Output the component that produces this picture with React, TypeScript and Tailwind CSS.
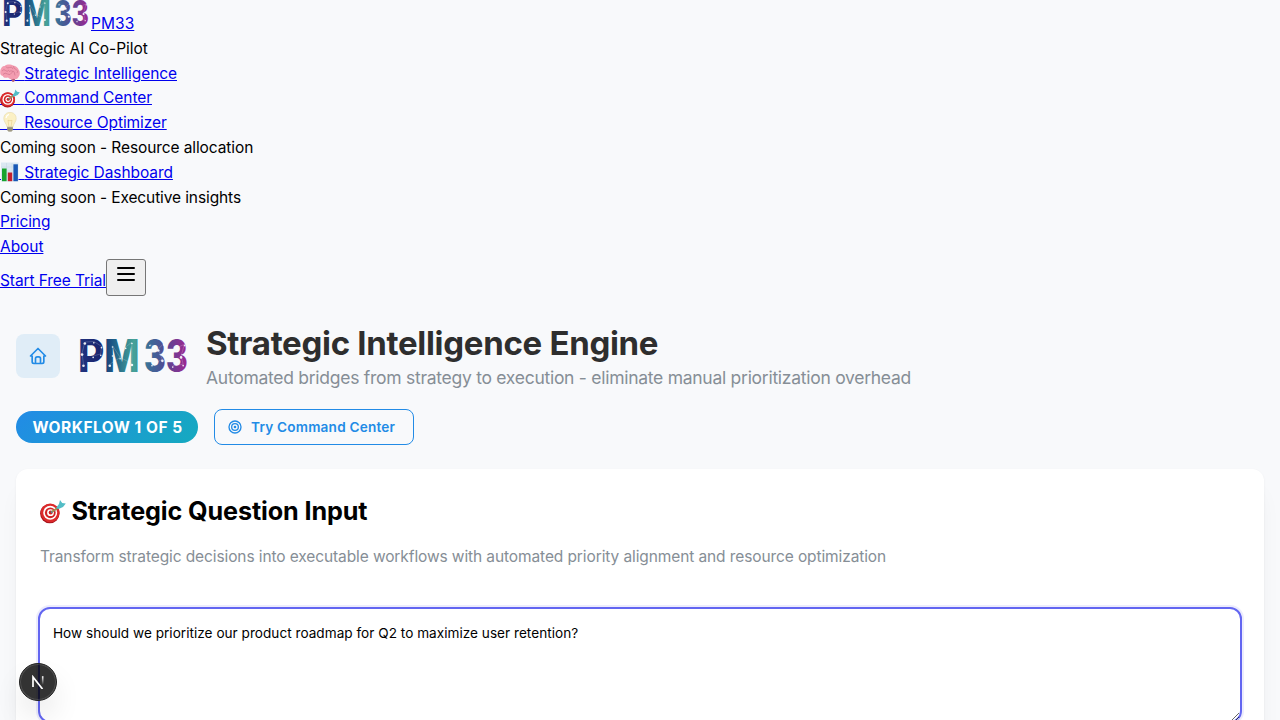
import { useId, type ReactNode } from "react";

function Logo({ className }: { className: string }) {
  const id = useId();
  const nodes = [
    [7, 4], [20, 3], [31, 10], [3, 20], [19, 24], [30, 21], [5, 36], [47, 9], [66, 11],
    [43, 36], [58, 26], [75, 4], [75, 35], [47, 22], [101, 7], [113, 14], [121, 6],
    [104, 36], [119, 29], [140, 12], [151, 7], [146, 24], [134, 38], [149, 36],
  ];
  return (
    <svg viewBox="0 0 156 52" className={className} aria-label="PM33 Logo">
      <defs>
        <linearGradient id={id} gradientUnits="userSpaceOnUse" x1="0" y1="0" x2="156" y2="0">
          <stop offset="0" stopColor="#20347e" />
          <stop offset=".18" stopColor="#1c246f" />
          <stop offset=".3" stopColor="#1c5a87" />
          <stop offset=".5" stopColor="#46a398" />
          <stop offset=".64" stopColor="#3b6c98" />
          <stop offset=".79" stopColor="#534a94" />
          <stop offset="1" stopColor="#a32590" />
        </linearGradient>
      </defs>
      <text y="49" fill={`url(#${id})`} className="font-['Inter',sans-serif] text-[65px] font-extrabold tracking-normal">
        <tspan x="-3" textLength="38" lengthAdjust="spacingAndGlyphs">P</tspan>
        <tspan x="35" textLength="51" lengthAdjust="spacingAndGlyphs">M</tspan>
        <tspan x="92" textLength="32" lengthAdjust="spacingAndGlyphs">3</tspan>
        <tspan x="124" textLength="32" lengthAdjust="spacingAndGlyphs">3</tspan>
      </text>
      <path d="M7 6L20 5 31 12 30 23 19 26M3 22L7 6M5 38L3 22M47 11L58 28 66 13 75 6 75 37 58 28M43 38L58 28M101 9L113 16 121 8M104 38L119 31 113 16M140 14L151 9 146 26 149 38 134 40" fill="none" stroke="#fff" strokeWidth=".6" opacity=".45" />
      {nodes.map(([x, y], i) => (
        <circle key={i} cx={x} cy={y + 4} r={i % 3 === 0 ? 1.9 : 1.2} fill="#fff" opacity=".9" />
      ))}
    </svg>
  );
}

function Dart({ className }: { className: string }) {
  return (
    <svg viewBox="0 0 26 26" className={className}>
      <circle cx="9.8" cy="15.6" r="9.7" fill="#a9151c" />
      <circle cx="10.2" cy="14.8" r="9.4" fill="#dc2a2b" />
      <circle cx="10.2" cy="14.8" r="7" fill="#fff" />
      <circle cx="10.3" cy="14.8" r="5.4" fill="#d22426" />
      <circle cx="10.5" cy="14.7" r="3.4" fill="#fff" />
      <circle cx="10.7" cy="14.6" r="2" fill="#cf2023" />
      <path d="M11 14.5L22 7" stroke="#3e9cab" strokeWidth="1.7" />
      <path d="M16 10L19 6 20 2 22.2 5 25.8 5.5 23 9 18.5 11Z" fill="#53bdc6" />
      <path d="M12 13.7L17 10.3" stroke="#b9873c" strokeWidth="1.5" />
    </svg>
  );
}

function Brain({ className }: { className: string }) {
  return (
    <svg viewBox="0 0 20 20" className={className}>
      <path d="M10.8 14.5L12 18.5Q13.8 19.8 15 17.5L15 13Z" fill="#b35d74" />
      <path d="M.2 10C0 5 2.6 3 4.6 3 7 1 11 1.2 13 2.6 16 2.8 18 4.8 18.7 6.8 20.4 8.8 20 12.6 18.5 14 17.5 16.4 15 16.4 13.5 15.8 11.5 17 9.5 15.8 8 14.5 5.5 15.3 3.5 14.8 2.7 13 1 12.5.2 11.5.2 10Z" fill="#f39cb0" />
      <path d="M2 8Q4 5.5 5.5 7.5T9 7M6 3.5Q7 6 9.5 4.5T13 6M13.5 3Q13 5 16 6.5T17 10M3 11.5Q5 9 7.5 11T12 9.5 15 12.5M9 8.5Q11 7 13 8.5" fill="none" stroke="#d37890" strokeWidth=".8" />
    </svg>
  );
}

function Bulb({ className }: { className: string }) {
  return (
    <svg viewBox="0 0 20 20" className={className}>
      <path d="M10 .4C13.8.4 16.2 3 16.2 6.7 16.2 9.8 13.5 11.4 13 15H7C6.5 11.4 3.8 9.8 3.8 6.7 3.8 3 6.2.4 10 .4Z" fill="#fbf0c4" stroke="#e6d9a6" strokeWidth=".6" />
      <path d="M8.8 14L8 8 9.3 9 10 8 10.8 9 12 8 11.2 14" fill="none" stroke="#e3c67e" strokeWidth=".5" />
      <path d="M6 6Q6.5 3 9 2.3" stroke="#fff" strokeWidth="1.2" fill="none" />
      <path d="M7.2 14.8H12.8V18L11.5 19.8H8.5L7.2 18Z" fill="#aaa58f" />
      <path d="M7 16.2H13M7.2 17.8H12.8" stroke="#77735f" strokeWidth=".6" />
    </svg>
  );
}

function Chart({ className }: { className: string }) {
  return (
    <svg viewBox="0 0 20 20" className={className}>
      <path d="M1 .5H18.5V19.5H1Z" fill="#dbe8f2" />
      <path d="M1 5H18M1 9H18M1 13H18M6.5 1V19M12 1V19" stroke="#c5d5e2" strokeWidth=".5" />
      <path d="M2 6.5H6.6V19.2H2Z" fill="#17a32d" />
      <path d="M7.8 10.5H12.2V19.2H7.8Z" fill="#c21f2d" />
      <path d="M13.4 2.3H17.9V19.2H13.4Z" fill="#1858b5" />
    </svg>
  );
}

function NavLink({ icon, className, children }: { icon?: ReactNode; className: string; children: ReactNode }) {
  return (
    <div className="flex h-[24.8px]">
      <a href="#" className="relative flex whitespace-pre text-[#0000ee] underline">
        {icon && <span className="w-5 whitespace-pre underline">{"     "}</span>}
        {icon && <span className="absolute top-px left-0">{icon}</span>}
        <span className={className}>{icon ? " " : ""}{children}</span>
      </a>
    </div>
  );
}

export default function App() {
  return (
    <div className="h-[720px] overflow-hidden bg-[#f8f9fb] font-['Inter',sans-serif] text-[15.5px] leading-[24.8px] text-black">
      <nav className="h-[297px]">
        <a href="#" className="flex h-[36.85px] items-start text-[#0000ee] underline">
          <Logo className="mt-[-2px] ml-[4px] h-[30px] w-[85px] shrink-0 overflow-visible" />
          <span className="mt-[12px] ml-[2px] tracking-[0.06px]">PM33</span>
        </a>
        <div className="tracking-[-0.05px]">Strategic AI Co-Pilot</div>
        <NavLink className="tracking-[-0.065px]" icon={<Brain className="size-5" />}>Strategic Intelligence</NavLink>
        <NavLink className="tracking-[-0.08px]" icon={<Dart className="mt-px size-5" />}>Command Center</NavLink>
        <NavLink className="tracking-[-0.085px]" icon={<Bulb className="size-5" />}>Resource Optimizer</NavLink>
        <div className="tracking-[-0.1px]">Coming soon - Resource allocation</div>
        <NavLink className="tracking-[-0.07px]" icon={<Chart className="size-5" />}>Strategic Dashboard</NavLink>
        <div className="tracking-[-0.11px]">Coming soon - Executive insights</div>
        <NavLink className="tracking-[-0.1px]">Pricing</NavLink>
        <NavLink className="tracking-[-0.06px]">About</NavLink>
        <div className="-mt-[0.85px] flex items-start">
          <a href="#" className="mt-[10px] w-[106px] tracking-[-0.09px] whitespace-nowrap text-[#0000ee] underline">Start Free Trial</a>
          <button className="flex h-[37px] w-10 justify-center rounded-[3px] border border-[#767676] bg-[#efefef] pt-[2px]">
            <svg viewBox="0 0 24 24" className="size-6" stroke="#000" strokeWidth="2" strokeLinecap="round">
              <path d="M4 6H20M4 12H20M4 18H20" />
            </svg>
          </button>
        </div>
      </nav>
      <main className="px-4 pt-[26px]">
        <header className="flex h-[66px] items-center">
          <button className="flex size-11 items-center justify-center rounded-lg bg-[#e0edf7] text-[#228be6]">
            <svg viewBox="0 0 24 24" className="size-5" fill="none" stroke="currentColor" strokeWidth="2" strokeLinecap="round" strokeLinejoin="round">
              <path d="M5 12H3L12 3 21 12H19V19A2 2 0 0 1 17 21H7A2 2 0 0 1 5 19V12M9 21V15A2 2 0 0 1 11 13H13A2 2 0 0 1 15 15V21" />
            </svg>
          </button>
          <Logo className="ml-5 h-9 w-[108px] overflow-visible" />
          <div className="ml-[18px] whitespace-nowrap">
            <h1 className="h-[42px] text-[33px] leading-[41px] font-bold tracking-[-0.3px] text-[#2e2e2e]">Strategic Intelligence Engine</h1>
            <p className="h-6 text-[17.5px] leading-[26px] tracking-[-0.27px] text-[#868e96]">Automated bridges from strategy to execution - eliminate manual prioritization overhead</p>
          </div>
        </header>
        <div className="mt-5 flex h-9 items-center gap-4">
          <div className="flex h-8 w-[182px] items-center justify-center rounded-full bg-linear-[135deg] from-[#228be6] to-[#15aabf] pt-[2px] pl-px font-bold tracking-[0.5px] whitespace-nowrap text-white">WORKFLOW 1 OF 5</div>
          <button className="flex h-9 w-[200px] items-center rounded-lg border border-[#228be6] pl-3 text-[13.6px] font-semibold tracking-[0.2px] whitespace-nowrap text-[#228be6]">
            <svg viewBox="0 0 24 24" className="size-4" fill="none" stroke="currentColor" strokeWidth="2">
              <circle cx="12" cy="12" r="1" /><circle cx="12" cy="12" r="5" /><circle cx="12" cy="12" r="9" />
            </svg>
            <span className="ml-2">Try Command Center</span>
          </button>
        </div>
        <section className="mt-6 h-[400px] rounded-xl bg-white px-[22px] pt-[24px] shadow-[0_1px_3px_rgba(0,0,0,0.05),0_20px_25px_-5px_rgba(0,0,0,0.05),0_10px_10px_-5px_rgba(0,0,0,0.04)]">
          <h2 className="flex h-[36px] items-center pl-[2px] text-[25.2px] leading-[35px] font-bold tracking-[-0.12px] whitespace-nowrap">
            <Dart className="mr-[5.5px] size-[26px]" />
            Strategic Question Input
          </h2>
          <p className="mt-4 h-6 pl-[2px] tracking-[-0.105px] whitespace-nowrap text-[#868e96]">Transform strategic decisions into executable workflows with automated priority alignment and resource optimization</p>
          <textarea
            className="mt-[38px] block h-[116px] w-full resize-y rounded-xl border-2 border-[#6366f1] bg-white px-[13px] py-[13px] text-[13.6px] leading-[22px] tracking-[0.018px] shadow-[0_0_0_2px_rgba(99,102,241,0.12)] outline-none"
            defaultValue="How should we prioritize our product roadmap for Q2 to maximize user retention?"
          />
        </section>
      </main>
      <button className="fixed top-[663px] left-[19px] flex size-[38px] items-center justify-center rounded-full border border-[#222] bg-[#000000cc] shadow-[inset_0_0_0_1px_#ffffff24,0_16px_32px_-8px_#0000003d]">
        <svg viewBox="0 0 14 14" className="size-[14px]" fill="none">
          <defs>
            <linearGradient id="stem" x1="0" y1="0" x2="0" y2="1"><stop stopColor="#fff" /><stop offset="1" stopColor="#fff" stopOpacity="0" /></linearGradient>
          </defs>
          <path d="M2 12V2L11.5 14" stroke="#fff" strokeWidth="1.7" />
          <path d="M10.9 1.2H12.5V9.8H10.9Z" fill="url(#stem)" />
        </svg>
      </button>
    </div>
  );
}
